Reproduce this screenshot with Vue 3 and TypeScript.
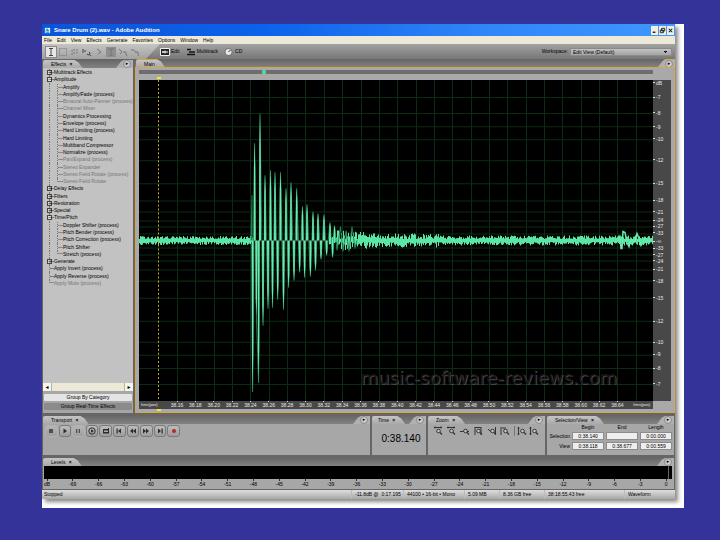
<script setup lang="ts">
interface TreeRow {
  text: string
  depth: 0 | 1
  box?: '+' | '−'
  dim?: boolean
  last?: boolean
}

const menus: string[] = ['File', 'Edit', 'View', 'Effects', 'Generate', 'Favorites', 'Options', 'Window', 'Help']

const tree: TreeRow[] = [
  { text: 'Multitrack Effects', depth: 0, box: '+' },
  { text: 'Amplitude', depth: 0, box: '−' },
  { text: 'Amplify', depth: 1 },
  { text: 'Amplify/Fade (process)', depth: 1 },
  { text: 'Binaural Auto-Panner (process)', depth: 1, dim: true },
  { text: 'Channel Mixer', depth: 1, dim: true },
  { text: 'Dynamics Processing', depth: 1 },
  { text: 'Envelope (process)', depth: 1 },
  { text: 'Hard Limiting (process)', depth: 1 },
  { text: 'Hard Limiting', depth: 1 },
  { text: 'Multiband Compressor', depth: 1 },
  { text: 'Normalize (process)', depth: 1 },
  { text: 'Pan/Expand (process)', depth: 1, dim: true },
  { text: 'Stereo Expander', depth: 1, dim: true },
  { text: 'Stereo Field Rotate (process)', depth: 1, dim: true },
  { text: 'Stereo Field Rotate', depth: 1, dim: true, last: true },
  { text: 'Delay Effects', depth: 0, box: '+' },
  { text: 'Filters', depth: 0, box: '+' },
  { text: 'Restoration', depth: 0, box: '+' },
  { text: 'Special', depth: 0, box: '+' },
  { text: 'Time/Pitch', depth: 0, box: '−' },
  { text: 'Doppler Shifter (process)', depth: 1 },
  { text: 'Pitch Bender (process)', depth: 1 },
  { text: 'Pitch Correction (process)', depth: 1 },
  { text: 'Pitch Shifter', depth: 1 },
  { text: 'Stretch (process)', depth: 1, last: true },
  { text: 'Generate', depth: 0, box: '+' },
  { text: 'Apply Invert (process)', depth: 0 },
  { text: 'Apply Reverse (process)', depth: 0 },
  { text: 'Apply Mute (process)', depth: 0, dim: true, last: true },
]

/* Time ruler: one label every 0.02 s */
const W = 514
const H = 320
const gridX: number[] = Array.from({ length: 26 }, (_, i) => 38 + i * 18.35)
const timeMarks = gridX.slice(0, 25).map((x, i) => ({
  at: (x / W) * 100,
  text: (38.16 + i * 0.02).toFixed(2),
}))

/* Level ruler: logarithmic, mirrored around the centre line */
const dbValues: number[] = [7, 8, 9, 10, 12, 15, 18, 21, 24, 27]
const dbOffset = (db: number): number => 320 * Math.pow(10, -db / 20)
const dbMarks = [
  { at: 0.8, text: 'dB' },
  ...dbValues.map((d) => ({ at: ((160 - dbOffset(d)) / H) * 100, text: `-${d}` })),
  { at: 47.6, text: '-33' },
  { at: 50.2, text: '-∞' },
  { at: 52.4, text: '-33' },
  ...dbValues.map((d) => ({ at: ((160 + dbOffset(d)) / H) * 100, text: `-${d}` })),
]
const gridY: number[] = [...dbValues, 33].flatMap((d) => [160 - dbOffset(d), 160 + dbOffset(d)])

const levelMarks = Array.from({ length: 25 }, (_, i) => ({
  at: ((3 + i * 25.8) / 628) * 100,
  text: i === 0 ? 'dB' : i === 24 ? '0' : String(-72 + i * 3),
}))

/* Decaying hit: x and height of each crest and trough */
const hit: [number, number][] = [
  [113, 115], [113.6, 311], [115.6, 63], [117.4, 236], [119.6, 302], [121, 34], [124, 245],
  [126, 95], [129, 228], [131.5, 90], [133.5, 227], [136, 92], [138.7, 219], [141.5, 92],
  [144.5, 229], [147, 108], [149.6, 207], [152, 102], [155, 200], [157.7, 108], [160.6, 192],
  [163.5, 126], [165.6, 197], [168, 124], [171.4, 196], [174, 131], [176.5, 190], [179, 133],
  [182, 179], [185, 134], [187.6, 175], [191, 142], [193.6, 177], [195.5, 145], [198, 170],
  [201.5, 146], [204, 171], [207, 150], [210, 171], [213, 146], [216, 168],
]
const hitPath = 'M112 160' + hit.map(([x, y]) => `L${x} ${y}`).join('') + 'L218 160'
const spikes = hit.slice(1, 34).map(([x, y]) => {
  const far = 160 + (y - 160) * 0.75
  return `M${x - 1} 160L${x - 0.7} ${far}L${x} ${y}L${x + 0.7} ${far}L${x + 1} 160Z`
}).join('')

let seed = 41
const rnd = (): number => {
  seed = (seed * 16807) % 2147483647
  return seed / 2147483647
}
const swell = (x: number): number => {
  if (x < 112) return 3
  if (x < 195) return 4
  if (x < 240) return 9 - (x - 195) * 0.07
  if (x < 300) return 5.5
  return 3.6
}
const noise = Array.from({ length: 514 }, (_, x) => {
  if (x > 113 && x < 190) return ''
  const a = swell(x)
  return `M${x + 0.5} ${(159.5 - 1 - rnd() * a).toFixed(1)}V${(160.5 + 1 + rnd() * a).toFixed(1)}`
}).join('')
const tail = 'M479 160L481 155L482 168L483 168L484 151L486 152L488 162L490 166L492 158L494 162L496 160L498 153L500 158L502 165L504 162L506 157L509 162L512 158'

const transport = ['stop', 'play', 'pause', 'playEnd', 'loop', 'begin', 'rewind', 'forward', 'end', 'record']
const zooms = ['in', 'out', 'full', 'sel', 'left', 'right', 'vin', 'vout']
const tools = ['time', 'marquee', 'lasso', 'scrub', 'cursor', 'beam', 'move', 'hybrid']
</script>

<template>
  <div class="desktop">
    <div class="sheet">
      <main class="window">
        <header class="title">
          <svg class="logo" viewBox="0 0 8 8"><path d="M1 1h6v6H1z" fill="#dff4ff" /><path d="M2 5l1.500-3 1 3 1-2M2 6h4" stroke="#177c91" fill="none" /></svg>
          <h1>Snare Drum (2).wav - Adobe Audition</h1>
          <div class="caption">
            <button aria-label="Minimize"><svg viewBox="0 0 8 10"><path d="M2 7h3" stroke="#111" stroke-width="1.500" /></svg></button>
            <button aria-label="Restore"><svg viewBox="0 0 8 10"><path d="M3 2.500h3.500v3H3zM1.500 4.500H5v3H1.500z" fill="#f4f2e8" stroke="#111" /></svg></button>
            <button aria-label="Close"><svg viewBox="0 0 8 10"><path d="M2 3l4 4M6 3L2 7" stroke="#111" stroke-width="1.200" /></svg></button>
          </div>
        </header>

        <nav class="menu">
          <button v-for="m in menus" :key="m">{{ m }}</button>
        </nav>

        <div class="toolbar">
          <div class="tools">
            <button v-for="t in tools" :key="t" :aria-label="t" :class="['tool', 'tool-' + t]">
              <svg viewBox="0 0 10 10">
                <path v-if="t === 'time'" d="M3 1.500h4M5 1.500v7M3 8.500h4" />
                <path v-else-if="t === 'marquee'" d="M1.500 1.500h7v7h-7z" stroke-dasharray="1 1" />
                <path v-else-if="t === 'lasso'" d="M2 8V3h6M3 6h4l1-2" stroke-dasharray="2 1" />
                <path v-else-if="t === 'scrub'" d="M1 2v4M3 3v2M7 5a1.500 1.500 0 1 1-2 2M7 7l2 2" />
                <path v-else-if="t === 'cursor'" d="M3 2l4 3-3 2" />
                <path v-else-if="t === 'beam'" d="M2 2h6M5 2v6.500M3.500 8.500h3" />
                <path v-else-if="t === 'move'" d="M1 2l3 3-2 2M5 5h3v3M8 8l1.500 1" />
                <path v-else d="M1 3h3l2 3M6 5h2v3M8 8l1 1" />
              </svg>
            </button>
          </div>
          <div class="modes">
            <button class="mode"><svg viewBox="0 0 10 8"><path d="M.5.5h9v7h-9z" fill="#222" stroke="#eee" /><path d="M2 4h6M3 3v2M5 2.500v3" stroke="#fff" /></svg>Edit</button>
            <button class="mode"><svg viewBox="0 0 10 8"><path d="M1 1.500h4M3 4h6M1 6.500h8" stroke="#161616" stroke-width="1.300" /></svg>Multitrack</button>
            <button class="mode"><svg viewBox="0 0 10 8"><circle cx="4.500" cy="4" r="3.500" fill="#e6e6e6" stroke="#444" stroke-width=".6" /><path d="M4.500 4l2-2" stroke="#333" /></svg>CD</button>
          </div>
          <label class="workspace" for="ws">Workspace:</label>
          <select id="ws" class="picker"><option>Edit View (Default)</option></select>
        </div>

        <div class="work">
          <section class="effects">
            <header class="strip">
              <h2 class="tab">Effects <button aria-label="Close Effects">×</button></h2>
              <button class="flyout" aria-label="Effects menu"></button>
            </header>
            <div class="list">
              <ul class="tree">
                <li v-for="(r, i) in tree" :key="i" :class="{ child: r.depth === 1, dim: r.dim, last: r.last }">
                  <button v-if="r.box" class="box">{{ r.box }}</button>
                  <span>{{ r.text }}</span>
                </li>
              </ul>
            </div>
            <div class="scroll">
              <button aria-label="Scroll left">◂</button><span class="thumb"></span><button aria-label="Scroll right">▸</button>
            </div>
            <div class="grouping">
              <button class="on">Group By Category</button>
              <button>Group Real-Time Effects</button>
            </div>
          </section>

          <section class="editor">
            <header class="strip bright">
              <h2 class="tab">Main</h2>
              <button class="flyout" aria-label="Main menu"></button>
            </header>
            <div class="editor-body">
              <div class="overview"><span class="span-mark"></span></div>
              <div class="canvas">
                <svg class="wave" :viewBox="`0 0 ${W} ${H}`" preserveAspectRatio="none">
                  <rect :width="W" :height="H" fill="#000" />
                  <g stroke="#0b2c12" stroke-width="1">
                    <path v-for="x in gridX" :key="'x' + x" :d="`M${Math.round(x) + 0.5} 0V${H}`" />
                    <path v-for="y in gridY" :key="'y' + y" :d="`M0 ${Math.round(y) + 0.5}H${W}`" />
                  </g>
                  <path d="M0 160.500H514" stroke="#66251d" />
                  <path :d="noise" stroke="#5be6a6" />
                  <path :d="hitPath" stroke="#287c55" fill="none" />
                  <path :d="spikes" fill="#67ecae" />
                  <path :d="tail" stroke="#67ecae" stroke-width="1.500" fill="none" />
                  <path d="M19.500 0V320" stroke="#b9ad25" stroke-dasharray="2 2" />
                </svg>
                <span class="flag top"></span>
                <span class="flag bottom"></span>
                <span class="credit">music-software-reviews.com</span>
              </div>
              <div class="db-ruler">
                <span v-for="(d, i) in dbMarks" :key="i" :style="{ top: d.at + '%' }">{{ d.text }}</span>
              </div>
              <div class="time-ruler">
                <span class="unit first">hms(pos)</span>
                <span v-for="t in timeMarks" :key="t.text" class="mark" :style="{ left: t.at + '%' }">{{ t.text }}</span>
                <span class="unit end">hms(pos)</span>
              </div>
            </div>
          </section>
        </div>

        <div class="dock">
          <section class="panel transport">
            <header class="strip">
              <h2 class="tab">Transport <button aria-label="Close Transport">×</button></h2>
              <button class="flyout" aria-label="Transport menu"></button>
            </header>
            <div class="keys">
              <button v-for="k in transport" :key="k" :aria-label="k" :class="{ off: k === 'stop' || k === 'pause' }">
                <svg viewBox="0 0 10 10">
                  <path v-if="k === 'stop'" d="M3 3h4v4H3z" />
                  <path v-else-if="k === 'play'" d="M3.500 2.500L7 5 3.500 7.500z" />
                  <path v-else-if="k === 'pause'" d="M3 3h1.300v4H3zM5.700 3H7v4H5.700z" />
                  <g v-else-if="k === 'playEnd'"><circle cx="5" cy="5" r="3.200" fill="none" stroke="#2c2c2c" /><path d="M4 3.200L7 5 4 6.800z" /></g>
                  <path v-else-if="k === 'loop'" d="M2 3h6v1.500H2zM2 6h6v1.500H2zM2 3h1v4H2zM7 2h1v5H7z" />
                  <path v-else-if="k === 'begin'" d="M2.500 2.500h1.200v5H2.500zM7 2.500v5L4 5z" />
                  <path v-else-if="k === 'rewind'" d="M5 2.500v5L2 5zM8 2.500v5L5 5z" />
                  <path v-else-if="k === 'forward'" d="M2 2.500v5L5 5zM5 2.500v5L8 5z" />
                  <path v-else-if="k === 'end'" d="M6.500 2.500h1.200v5H6.500zM3 2.500v5L6 5z" />
                  <circle v-else cx="5" cy="5" r="2" fill="#b02a2a" />
                </svg>
              </button>
            </div>
          </section>

          <section class="panel time">
            <header class="strip">
              <h2 class="tab">Time <button aria-label="Close Time">×</button></h2>
              <button class="flyout" aria-label="Time menu"></button>
            </header>
            <output class="clock">0:38.140</output>
          </section>

          <section class="panel zoom">
            <header class="strip">
              <h2 class="tab">Zoom <button aria-label="Close Zoom">×</button></h2>
              <button class="flyout" aria-label="Zoom menu"></button>
            </header>
            <div class="lenses">
              <button v-for="z in zooms" :key="z" :aria-label="'Zoom ' + z" :class="'lens-' + z">
                <svg viewBox="0 0 10 10">
                  <path v-if="z === 'in' || z === 'out'" d="M1 1.500h8M2 .5v2M8 .5v2" />
                  <path v-else-if="z === 'vin' || z === 'vout'" d="M1.500 1v8M.5 2h2M.5 8h2" />
                  <path v-else-if="z === 'full'" d="M0 5.500h9" />
                  <path v-else-if="z === 'sel'" d="M2 1v8M8 1v8M2 1.500h6" />
                  <path v-else-if="z === 'left'" d="M1 3l3 3M8.500 1v8" />
                  <path v-else d="M1 1v8M2 2h4" />
                  <circle cx="5.500" cy="5" r="1.800" fill="#c8c8c8" />
                  <path d="M7 6.500L9 8.500" stroke-width="1.300" />
                </svg>
              </button>
            </div>
          </section>

          <section class="panel selection">
            <header class="strip">
              <h2 class="tab">Selection/View <button aria-label="Close Selection/View">×</button></h2>
              <button class="flyout" aria-label="Selection/View menu"></button>
            </header>
            <div class="fields">
              <span></span><b>Begin</b><b>End</b><b>Length</b>
              <label for="sb">Selection</label>
              <input id="sb" value="0:38.140" /><input aria-label="Selection end" value="" /><input aria-label="Selection length" value="0:00.000" />
              <label for="vb">View</label>
              <input id="vb" value="0:38.118" /><input aria-label="View end" value="0:38.677" /><input aria-label="View length" value="0:00.559" />
            </div>
          </section>
        </div>

        <section class="panel levels">
          <header class="strip">
            <h2 class="tab">Levels <button aria-label="Close Levels">×</button></h2>
            <button class="flyout" aria-label="Levels menu"></button>
          </header>
          <div class="meter"></div>
          <div class="level-ruler">
            <span v-for="l in levelMarks" :key="l.text" :style="{ left: l.at + '%' }">{{ l.text }}</span>
          </div>
        </section>

        <footer class="status">
          <span class="s-state">Stopped</span>
          <span class="s-cursor">-11.8dB @&nbsp; 0:17.195</span>
          <span class="s-format">44100 • 16-bit • Mono</span>
          <span class="s-size">5.09 MB</span>
          <span class="s-free">8.36 GB free</span>
          <span class="s-time">38:18:55.43 free</span>
          <span class="s-view">Waveform</span>
        </footer>
      </main>
    </div>
  </div>
</template>

<style>
body {
  margin: 0;
  background: #333399;
}
</style>

<style scoped>
* {
  box-sizing: border-box;
}
.desktop {
  display: flex;
  min-height: 100vh;
  padding: 24px 36px 32px 42px;
  background: #333399;
  font: 5px/7px "Liberation Sans", Arial, sans-serif;
  color: #000;
}
button,
input,
select {
  margin: 0;
  padding: 0;
  border: 0;
  border-radius: 0;
  background: none;
  font: inherit;
  color: inherit;
}
h1,
h2,
ul {
  margin: 0;
  padding: 0;
  font: inherit;
}
svg {
  display: block;
}
.sheet {
  display: flex;
  flex: 1;
  padding: 0 9px 9px 0;
  background: #fff;
}
.window {
  display: flex;
  flex: 1;
  flex-direction: column;
  min-width: 0;
  background: #666;
  box-shadow: 3px 3px 4px #8a8a8a;
}

/* Title and menu */
.title {
  display: flex;
  align-items: center;
  gap: 3px;
  height: 12px;
  padding: 0 1px 0 2px;
  background: linear-gradient(90deg, #0a55da, #0c62ea 35%, #2f86f8 70%, #3f97ff);
  color: #fff;
}
.logo {
  width: 7px;
  height: 7px;
}
.title h1 {
  flex: 1;
  font: bold 6px/12px "Liberation Sans", Arial, sans-serif;
}
.caption {
  display: flex;
  gap: 1px;
}
.caption button {
  width: 7px;
  height: 9px;
  background: #f1efe2;
}
.caption svg {
  width: 7px;
  height: 9px;
}
.menu {
  display: flex;
  gap: 5px;
  height: 8px;
  padding-left: 2px;
  background: #ece9d8;
}

/* Toolbar */
.toolbar {
  display: flex;
  align-items: center;
  height: 15px;
  padding-right: 3px;
  background: linear-gradient(#a2a2a2, #777);
}
.tools {
  display: flex;
  align-items: center;
  gap: 2px;
  width: 118px;
  height: 15px;
  padding-left: 4px;
  background: linear-gradient(#c4c4c4, #a2a2a2);
  clip-path: polygon(0 0, 100% 0, 88% 100%, 0 100%);
}
.tool {
  width: 10px;
  height: 10px;
}
.tool svg {
  width: 10px;
  height: 10px;
  fill: none;
  stroke: #777;
}
.tool-time {
  background: #e6e6e6;
  outline: 1px solid #888;
}
.tool-time svg,
.tool-scrub svg {
  stroke: #444;
}
.tool-beam {
  background: #8e8e8e;
}
.modes {
  display: flex;
  flex: 1;
  gap: 6px;
}
.mode {
  display: flex;
  align-items: center;
  gap: 1px;
}
.mode svg {
  width: 10px;
  height: 8px;
}
.workspace {
  margin-right: 2px;
}
.picker {
  width: 102px;
  height: 8px;
  padding-left: 2px;
  appearance: none;
  border: 1px solid #8a8a8a;
  background: linear-gradient(45deg, transparent 50%, #111 50%) right 5px top 2px / 2px 2px no-repeat,
    linear-gradient(-45deg, transparent 50%, #111 50%) right 3px top 2px / 2px 2px no-repeat,
    linear-gradient(#c2c2c2, #a4a4a4);
  line-height: 6px;
}

/* Panel headers */
.strip {
  display: flex;
  flex: none;
  align-items: flex-end;
  justify-content: space-between;
  height: 9px;
  background: linear-gradient(#646464, #828282);
}
.tab {
  height: 8px;
  padding: 0 10px 0 8px;
  background: linear-gradient(#c4c4c4, #aaa);
  border-radius: 2px 0 0 0;
  clip-path: polygon(0 0, calc(100% - 8px) 0, calc(100% - 4px) 30%, 100% 100%, 0 100%);
  line-height: 8px;
  white-space: nowrap;
}
.tab button {
  margin-left: 2px;
  font-weight: bold;
}
.flyout {
  display: flex;
  align-items: center;
  justify-content: flex-end;
  width: 17px;
  height: 8px;
  padding-right: 2px;
  background: #b0b0b0;
  clip-path: polygon(0 100%, 5px 20%, 8px 0, 100% 0, 100% 100%);
}
.flyout::before {
  content: "▸";
  width: 6px;
  height: 6px;
  border: 1px solid #888;
  border-radius: 50%;
  background: #ccc;
  font: 5px/4px "DejaVu Sans", sans-serif;
}

/* Work area */
.work {
  display: flex;
  flex: 1;
  gap: 2px;
  min-height: 0;
  padding-left: 1px;
}
.effects {
  display: flex;
  flex: none;
  flex-direction: column;
  width: 90px;
  background: #a6a6a6;
}
.list {
  flex: 1;
  padding: 1px 0 0 4px;
  background: #c2c2c2;
}
.tree {
  display: grid;
  grid-auto-rows: 1fr;
  height: 218px;
  list-style: none;
}
.tree li {
  position: relative;
  display: flex;
  align-items: center;
  padding-left: 7px;
  white-space: nowrap;
}
.tree li::before {
  content: "";
  position: absolute;
  inset: 0 auto 0 2px;
  width: 4px;
  border-left: 1px dotted #777;
  background: linear-gradient(#777, #777) 0 50% / 4px 1px no-repeat;
}
.tree li.child::before {
  background: none;
}
.tree li.child {
  padding-left: 16px;
}
.tree li.child::after {
  content: "";
  position: absolute;
  inset: 0 auto 0 10px;
  width: 5px;
  border-left: 1px dotted #777;
  background: linear-gradient(#888, #888) 0 50% / 5px 1px no-repeat;
}
.tree li.child.last::after,
.tree li.last:not(.child)::before {
  bottom: 50%;
  border-bottom: 1px solid #888;
  background: none;
}
.dim {
  color: #777;
}
.box {
  position: absolute;
  left: 0;
  width: 5px;
  height: 5px;
  border: 1px solid #444;
  background: #ddd;
  font: 5px/3px "DejaVu Sans", sans-serif;
}
.scroll {
  display: flex;
  height: 8px;
  background: #f7f6ee;
  font: 6px/8px "DejaVu Sans", sans-serif;
}
.scroll button {
  width: 8px;
}
.thumb {
  flex: 1;
  border: 1px solid #b5b3a6;
  border-width: 0 1px;
  background: #ece9d8;
}
.grouping {
  display: grid;
  gap: 2px;
  padding: 3px 1px;
}
.grouping button {
  height: 7px;
  border-radius: 1px;
  background: #8b8b8b;
  line-height: 7px;
}
.grouping .on {
  background: #e4e4e4;
}
.editor {
  display: flex;
  flex: 1;
  flex-direction: column;
  min-width: 0;
}
.bright {
  height: 8px;
}
.bright .tab {
  margin-left: 1px;
  border-top: 1px solid #d9a53c;
}
.bright .flyout {
  border-top: 1px solid #d9a53c;
}
.editor-body {
  display: grid;
  flex: 1;
  grid-template-columns: 1fr 18px;
  grid-template-rows: 4px 1fr 8px;
  padding: 2px 3px 3px;
  border: 1px solid #dba63d;
  background: #a9a9a9;
}
.overview {
  height: 4px;
  background: #6d6d6d;
}
.span-mark {
  display: block;
  width: 4px;
  height: 4px;
  margin-left: 24%;
  background: #52d69a;
}
.canvas {
  position: relative;
  grid-row: 2;
  margin-top: 6px;
}
.wave {
  position: absolute;
  inset: 0;
  width: 100%;
  height: 100%;
}
.flag {
  position: absolute;
  left: 18px;
  width: 4px;
  height: 2px;
  background: #f5ea2a;
}
.flag.top {
  top: -3px;
}
.flag.bottom {
  bottom: -10px;
}
.credit {
  position: absolute;
  right: 36px;
  bottom: 12px;
  color: #151515;
  font: 18px/22px "DejaVu Sans", Verdana, sans-serif;
  text-shadow: 1px 1px 0 #484848;
}
.db-ruler {
  position: relative;
  grid-row: 2;
  margin-top: 6px;
  background: #484848;
  color: #e8e8e8;
}
.db-ruler span {
  position: absolute;
  left: 0;
  height: 6px;
  margin-top: -3px;
  padding-left: 3px;
  background: linear-gradient(#ddd, #ddd) 0 50% / 2px 1px no-repeat;
  line-height: 6px;
}
.time-ruler {
  position: relative;
  grid-row: 3;
  background: #484848;
  color: #e8e8e8;
}
.time-ruler span {
  position: absolute;
  line-height: 8px;
}
.mark {
  width: 18px;
  height: 8px;
  margin-left: -9px;
  background: linear-gradient(#ddd, #ddd) 50% 0 / 1px 1px no-repeat;
  text-align: center;
}
.unit {
  font-size: 4px;
}
.unit.first {
  left: 2px;
}
.unit.end {
  right: 3px;
}

/* Lower dock */
.dock {
  display: flex;
  gap: 2px;
  height: 43px;
  padding: 2px 1px 1px;
}
.panel {
  display: flex;
  flex: none;
  flex-direction: column;
  background: #a7a7a7;
}
.dock .transport {
  flex: 1;
}
.time {
  width: 54px;
}
.zoom {
  width: 117px;
}
.selection {
  width: 127px;
}
.dock .time .tab {
  padding-left: 6px;
}
.keys {
  display: flex;
  gap: 1px;
  width: 139px;
  padding: 1px 2px;
}
.keys button {
  display: flex;
  flex: 1;
  justify-content: center;
  height: 12px;
  border: 1px solid #7a7a7a;
  border-radius: 3px;
  background: linear-gradient(#bdbdbd, #9c9c9c);
}
.keys .off {
  border-color: #b8b8b8;
  opacity: 0.7;
}
.keys svg {
  width: 10px;
  height: 10px;
  fill: #2c2c2c;
}
.clock {
  padding-top: 9px;
  padding-left: 4px;
  font-size: 10px;
  line-height: 12px;
  text-align: center;
}
.lenses {
  display: flex;
  justify-content: space-between;
  padding: 2px 6px 2px 5px;
}
.lenses button {
  width: 10px;
  height: 10px;
}
.lenses svg {
  width: 10px;
  height: 10px;
  fill: none;
  stroke: #333;
}
.lenses .lens-vin {
  width: 12px;
  padding-left: 2px;
  border-left: 1px solid #777;
}
.fields {
  display: grid;
  grid-template-columns: 21px repeat(3, 1fr);
  gap: 2px;
  align-items: center;
  padding: 0 2px;
}
.fields b {
  font-weight: normal;
  line-height: 6px;
  text-align: center;
}
.fields label {
  text-align: right;
}
.fields input {
  width: 100%;
  height: 8px;
  border: 1px solid #8c8c8c;
  background: #eee;
  line-height: 6px;
  text-align: center;
}
.levels {
  margin: 1px 1px 0;
}
.meter {
  height: 13px;
  margin: 0 2px 0 1px;
  border-right: 3px solid #000;
  background: linear-gradient(#666, #666) right / 1px 100% no-repeat #000;
}
.level-ruler {
  position: relative;
  height: 10px;
  margin: 0 2px 0 1px;
}
.level-ruler span {
  position: absolute;
  width: 14px;
  height: 9px;
  margin-left: -7px;
  background: linear-gradient(#333, #333) 50% 0 / 1px 2px no-repeat;
  line-height: 11px;
  text-align: center;
}
.status {
  display: flex;
  height: 10px;
  padding-left: 2px;
  border-top: 1px solid #666;
  background: linear-gradient(#dedede, #a8a8a8);
  line-height: 9px;
  white-space: nowrap;
}
.status span + span {
  flex: none;
  padding-left: 3px;
  border-left: 1px solid #bbb;
}
.s-state {
  flex: 1;
}
.s-cursor {
  width: 52px;
}
.s-format {
  width: 61px;
}
.s-size {
  width: 35px;
}
.s-free {
  width: 45px;
}
.s-time {
  width: 80px;
}
.s-view {
  width: 51px;
}
</style>
